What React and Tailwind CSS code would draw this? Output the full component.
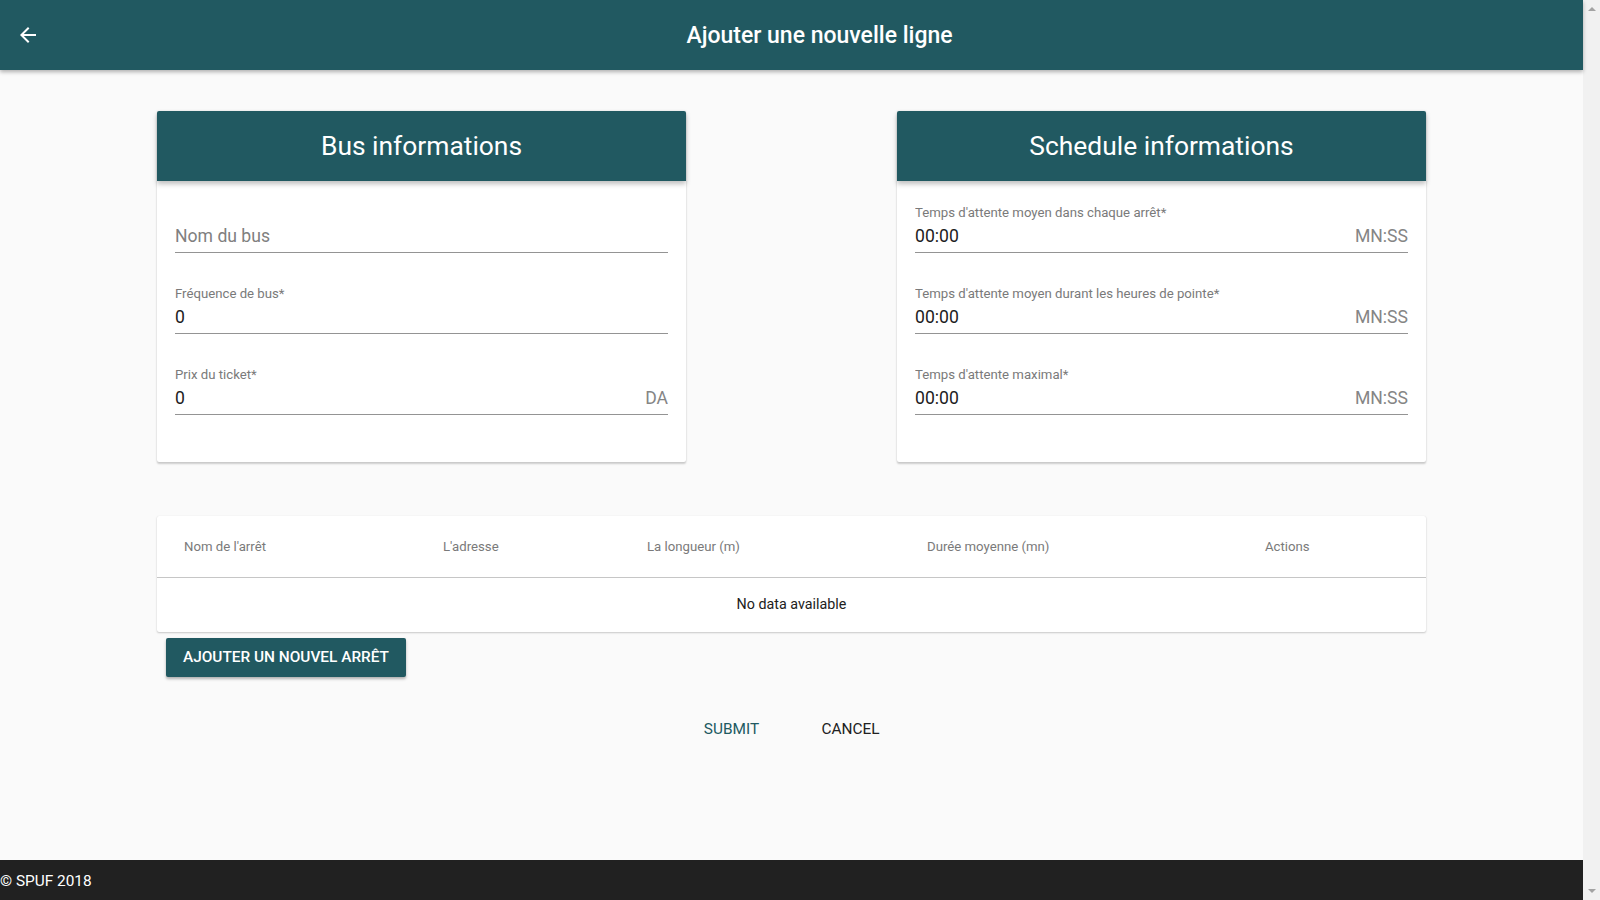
import React from 'react';

const TEAL = 'bg-[#215961]';

const Field = ({ label, value, placeholder, suffix }) => (
  <div className="flex flex-col">
    <div className="h-4 text-[13.2px] leading-4 text-[#7a7a7a] truncate">{label}</div>
    <div className="h-[32px] flex items-center justify-between border-b border-[#949494]">
      {value !== undefined ? (
        <span className="text-[17.6px] text-[#212121]">{value}</span>
      ) : (
        <span className="text-[17.6px] text-[#808080]">{placeholder}</span>
      )}
      {suffix && <span className="text-[17.6px] text-[#858585]">{suffix}</span>}
    </div>
    <div className="h-[33px]"></div>
  </div>
);

const Card = ({ title, children }) => (
  <div className="w-[529px] bg-white shadow-[0_2px_2px_rgba(0,0,0,0.18),0_0_2px_rgba(0,0,0,0.1)] rounded-[2px]">
    <div className={`h-[70px] pt-[2px] ${TEAL} flex items-center justify-center shadow-[0_3px_5px_rgba(0,0,0,0.25)] rounded-t-[2px] relative z-10`}>
      <span className="text-white text-[26.4px] font-normal">{title}</span>
    </div>
    <div className="px-[18px] pt-[24px] pb-[14px]">{children}</div>
  </div>
);

const columns = ["Nom de l'arrêt", "L'adresse", 'La longueur (m)', 'Durée moyenne (mn)', 'Actions'];

export default function App() {
  return (
    <div className="flex h-screen w-full font-['Roboto','Noto_Sans',sans-serif] overflow-hidden">
      <div className="flex-1 min-w-0 flex flex-col bg-[#fafafa]">
        {/* toolbar */}
        <header className={`h-[70px] shrink-0 ${TEAL} flex items-center shadow-[0_2px_4px_rgba(0,0,0,0.3)] relative z-20`}>
          <button className="w-[56px] h-full flex items-center justify-center">
            <svg width="24" height="24" viewBox="0 0 24 24" fill="white">
              <path d="M20 11H7.83l5.59-5.59L12 4l-8 8 8 8 1.41-1.41L7.83 13H20v-2z" />
            </svg>
          </button>
          <h1 className="flex-1 pt-[2px] text-center text-white text-[23px] font-medium">Ajouter une nouvelle ligne</h1>
        </header>

        <main className="flex-1 px-[157px] pt-[41px]">
          <div className="flex justify-between">
            <Card title="Bus informations">
              <Field label="" placeholder="Nom du bus" />
              <Field label="Fréquence de bus*" value="0" />
              <Field label="Prix du ticket*" value="0" suffix="DA" />
            </Card>
            <Card title="Schedule informations">
              <Field label="Temps d'attente moyen dans chaque arrêt*" value="00:00" suffix="MN:SS" />
              <Field label="Temps d'attente moyen durant les heures de pointe*" value="00:00" suffix="MN:SS" />
              <Field label="Temps d'attente maximal*" value="00:00" suffix="MN:SS" />
            </Card>
          </div>

          {/* stops table */}
          <div className="mt-[54px] bg-white shadow-[0_1px_2px_rgba(0,0,0,0.2),0_0_1px_rgba(0,0,0,0.1)] rounded-[2px]">
            <div className="h-[62px] pl-[27px] grid grid-cols-[259px_204px_280px_338px_1fr] items-center border-b border-[#c6c6c6]">
              {columns.map((c) => (
                <span key={c} className="text-[13.2px] text-[#7a7a7a]">{c}</span>
              ))}
            </div>
            <div className="h-[54px] flex items-center justify-center text-[14.3px] text-[#212121]">No data available</div>
          </div>

          <button className={`mt-[6px] ml-[9px] w-[240px] h-[39px] ${TEAL} text-white text-[15.4px] font-medium uppercase rounded-[2px] shadow-[0_2px_3px_rgba(0,0,0,0.3)]`}>
            Ajouter un nouvel arrêt
          </button>

          <div className="mt-[35px] flex justify-center gap-[30px]">
            <button className="h-9 min-w-[88px] px-4 text-[15.4px] uppercase text-[#215961]">Submit</button>
            <button className="h-9 min-w-[88px] px-4 text-[15.4px] uppercase text-[#212121]">Cancel</button>
          </div>
        </main>

        <footer className="h-[40px] shrink-0 pt-[3px] bg-[#212121] flex items-center">
          <span className="text-white text-[15.4px]">© SPUF 2018</span>
        </footer>
      </div>

      {/* scrollbar */}
      <div className="w-[17px] shrink-0 bg-[#f1f1f1] flex flex-col items-center justify-between py-[7px]">
        <svg width="8" height="4" viewBox="0 0 8 4" fill="#a3a3a3"><path d="M4 0L8 4H0z" /></svg>
        <svg width="8" height="4" viewBox="0 0 8 4" fill="#a3a3a3"><path d="M0 0h8L4 4z" /></svg>
      </div>
    </div>
  );
}
